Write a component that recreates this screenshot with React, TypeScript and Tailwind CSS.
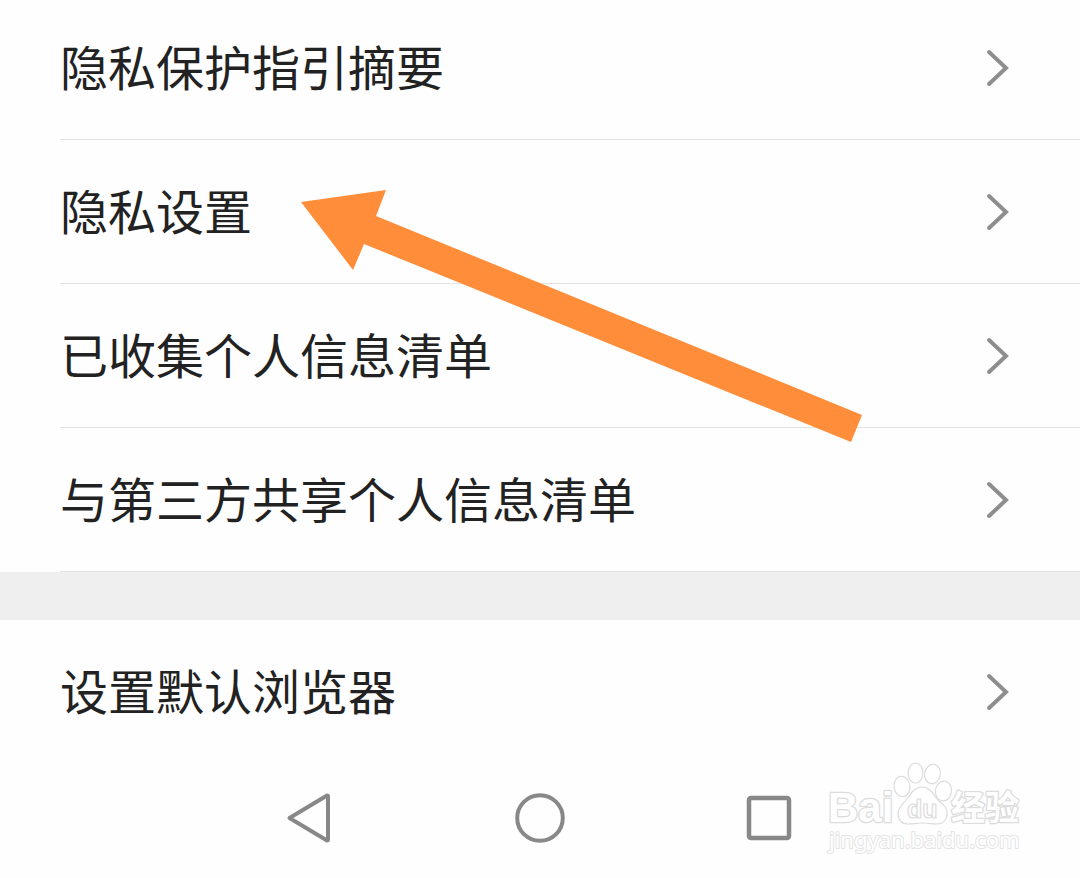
const privacyItems = [
  "隐私保护指引摘要",
  "隐私设置",
  "已收集个人信息清单",
  "与第三方共享个人信息清单",
];

const Chevron = () => (
  <svg
    className="shrink-0"
    width="24"
    height="40"
    viewBox="0 0 24 40"
    fill="none"
    stroke="#8e8e8e"
    strokeWidth="4"
    strokeLinecap="round"
    aria-hidden="true"
  >
    <path d="M3 4 L20 20 L3 36" />
  </svg>
);

const SettingRow = ({ label, divider }: { label: string; divider?: boolean }) => (
  <li className="pl-[60px]">
    <button
      type="button"
      className={`flex h-36 w-full items-center justify-between border-b pr-[70px] text-left text-5xl text-[#222222] ${
        divider ? "border-[#e2e2e2]" : "border-transparent"
      }`}
    >
      <span className="pb-1.5">{label}</span>
      <Chevron />
    </button>
  </li>
);

const NavBar = () => (
  <nav className="flex h-[108px] items-center justify-center gap-[180px]">
    <button type="button" aria-label="返回">
      <svg width="50" height="50" viewBox="0 0 50 50" fill="none" stroke="#888888" strokeWidth="4" strokeLinejoin="round">
        <path d="M4.500 25 L42 2.500 Q43 2.500 43 3.500 V46.500 Q43 47.500 42 47.500 Z" />
      </svg>
    </button>
    <button type="button" aria-label="主页">
      <svg width="50" height="50" viewBox="0 0 50 50" fill="none" stroke="#888888" strokeWidth="4">
        <circle cx="25" cy="25" r="22.8" />
      </svg>
    </button>
    <button type="button" aria-label="最近任务">
      <svg width="50" height="50" viewBox="0 0 50 50" fill="none" stroke="#888888" strokeWidth="4.5">
        <rect x="4" y="5" width="40" height="40" rx="2" />
      </svg>
    </button>
  </nav>
);

const Arrow = () => (
  <svg
    className="pointer-events-none absolute left-[300px] top-[188px]"
    width="564"
    height="256"
    viewBox="300 188 564 256"
    aria-hidden="true"
  >
    <path
      d="M301 202 L386 190 L376 216 L862 415 L851 442 L364 244 L353 270 Z"
      fill="#ff8d3a"
    />
  </svg>
);

const Watermark = () => (
  <svg
    className="pointer-events-none absolute right-14 top-[760px]"
    width="200"
    height="100"
    viewBox="824 760 200 100"
    fill="#ffffff"
    stroke="#dcdcdc"
    strokeWidth="1.2"
    strokeLinejoin="round"
  >
    <g
      className="font-['Liberation_Sans','Noto_Sans_CJK_SC',sans-serif] font-bold"
      strokeWidth="2.6"
      paintOrder="stroke"
    >
      <text x="828" y="822" fontSize="42">
        Bai
      </text>
      <text x="951" y="820" fontSize="34">
        经验
      </text>
    </g>
    <ellipse cx="902" cy="786.5" rx="8" ry="10.2" transform="rotate(-8 902 786.5)" />
    <ellipse cx="915.5" cy="773" rx="7.4" ry="10" />
    <ellipse cx="932.5" cy="774" rx="7.8" ry="9.8" transform="rotate(10 932.5 774)" />
    <ellipse cx="943.5" cy="791" rx="8" ry="10" transform="rotate(8 943.5 791)" />
    <path d="M922 787 C914 787 911 794 907 799 C903 804 898 807 898 814 C898 820 902 824 908 824 C913 824 916 823 922 823 C929 823 932 824 937 824 C943 824 947 820 947 813 C947 806 942 804 937 799 C933 794 930 787 922 787 Z" />
    <text
      x="907"
      y="818"
      fontSize="25"
      className="font-['Liberation_Sans',sans-serif] font-bold"
    >
      du
    </text>
    <text
      x="829"
      y="848"
      fontSize="22"
      strokeWidth="2"
      paintOrder="stroke"
      stroke="#e4e4e4"
      className="font-['Noto_Sans',sans-serif]"
    >
      jingyan.baidu.com
    </text>
  </svg>
);

const App = () => {
  return (
    <div className="relative min-h-screen overflow-hidden bg-[#fefefe] font-['Noto_Sans_CJK_SC',sans-serif]">
      <main>
        {/* list is scrolled, so the first row is slightly cut at the top */}
        <ul className="-mt-1">
          {privacyItems.map((label) => (
            <SettingRow key={label} label={label} divider />
          ))}
        </ul>
        <div className="h-12 bg-[#efefef]" />
        <ul>
          <SettingRow label="设置默认浏览器" />
        </ul>
      </main>
      <NavBar />
      <Arrow />
      <Watermark />
    </div>
  );
};

export default App;
